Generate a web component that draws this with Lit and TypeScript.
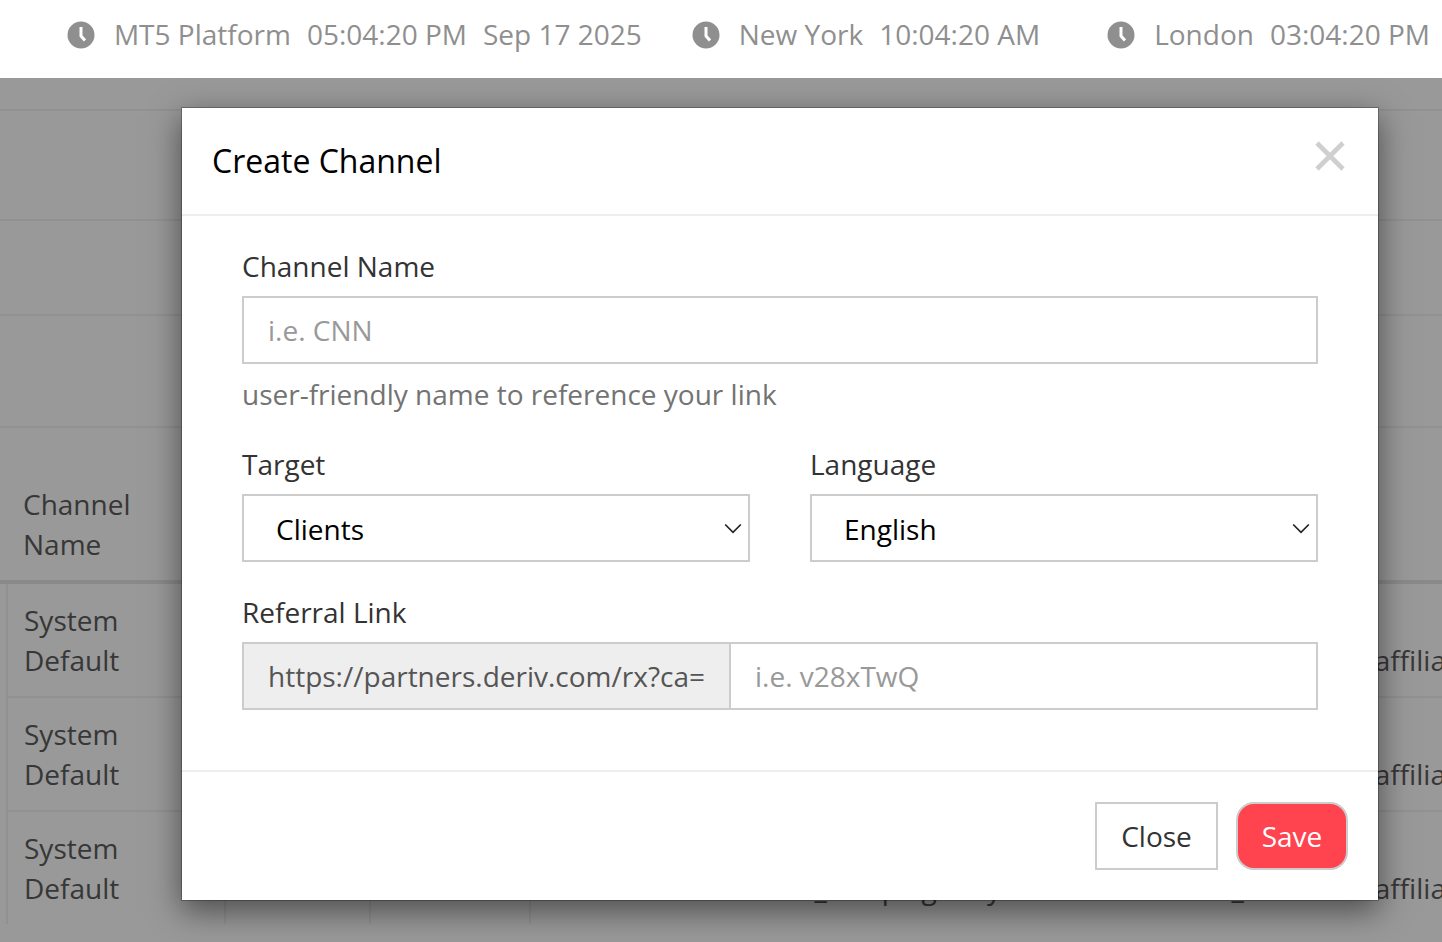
import { LitElement, html, css } from "lit";
import { customElement } from "lit/decorators.js";

const clock = html`<svg class="clock" viewBox="0 0 28 28" aria-hidden="true"><circle cx="14" cy="14" r="13.5" fill="#8f8f8f"/><path d="M14 6v9l4 4.5" fill="none" stroke="#fff" stroke-width="3"/></svg>`;
const chevron = html`<svg class="chev" viewBox="0 0 18 11" aria-hidden="true"><path d="M1.2 1.5 9 9.3l7.8-7.8" fill="none" stroke="#222" stroke-width="1.7"/></svg>`;

@customElement("app-root")
export class AppRoot extends LitElement {
  static styles = css`
    :host { display: block; width: 1442px; height: 942px; overflow: hidden; font-family: "Open Sans", sans-serif; font-size: 28px; line-height: 40px; color: #5c5c5c; background: #fff; }
    * { box-sizing: border-box; }
    .topbar { height: 78px; display: flex; justify-content: flex-end; align-items: center; padding: 0 12px 10px 0; gap: 50px; color: #8f8f8f; white-space: nowrap; }
    .clockgroup { display: flex; align-items: center; gap: 16px; }
    .clockgroup.last { margin-left: 17px; }
    .clock { width: 28px; height: 28px; flex: none; margin-top: 1px; margin-right: 3px; }
    .stage { position: relative; height: 864px; overflow: hidden; }
    .band { border-bottom: 2px solid #f2f2f2; }
    .b1 { height: 33px; } .b2 { height: 110px; } .b3 { height: 95px; } .b4 { height: 112px; }
    .thead { height: 156px; border-bottom: 4px solid #e6e6e6; padding: 56px 0 0 23px; }
    .thead div { width: 130px; }
    .row { display: grid; grid-template-columns: 218px 145px 160px 212px 1fr; height: 114px; margin-left: 6px; border-bottom: 2px solid #f2f2f2; }
    .row.end { height: 112px; border-bottom: 0; }
    .cell { border-left: 2px solid #f2f2f2; padding: 16px 16px; }
    .link { border-left: 0; padding: 56px 0 0; white-space: nowrap; overflow: hidden; }
    .aff { margin-left: 6px; }
    .overlay { position: absolute; inset: 0; background: rgba(0, 0, 0, 0.4); }
    .modal { position: absolute; left: 181px; top: 29px; width: 1198px; height: 794px; background: #fff; background-clip: padding-box; border: 1px solid rgba(0, 0, 0, 0.25); box-shadow: 0 10px 30px rgba(0, 0, 0, 0.5); display: flex; flex-direction: column; color: #333; }
    .mhead { height: 108px; flex: none; border-bottom: 2px solid #eee; padding: 32px 30px 0; display: flex; justify-content: space-between; }
    h4 { margin: 0; font-size: 32px; line-height: 42px; font-weight: 400; color: #000; }
    .x { width: 30px; height: 30px; margin: 1px 3px 0 0; flex: none; filter: blur(0.5px); }
    .mbody { flex: 1; padding: 31px 60px 0; border-bottom: 2px solid #eee; }
    label { display: block; line-height: 38px; margin-bottom: 11px; }
    input, select { display: block; width: 100%; height: 68px; border: 2px solid #ccc; background: #fff; font: inherit; border-radius: 0; outline: none; padding: 0 24px; color: #000; appearance: none; }
    input::placeholder { color: #999; opacity: 1; }
    .help { margin: 10px 0 31px; color: #737373; }
    .cols { display: grid; grid-template-columns: 1fr 1fr; gap: 60px; margin-bottom: 31px; }
    .selwrap { position: relative; }
    select { padding: 2px 0 0 32px; }
    .chev { position: absolute; right: 8px; top: 29px; width: 18px; height: 11px; pointer-events: none; }
    .group { display: flex; }
    .addon { flex: none; width: 489px; height: 68px; line-height: 64px; padding-left: 24px; background: #eee; border: 2px solid #ccc; color: #555; white-space: nowrap; }
    .group input { flex: 1; border-left: 0; }
    .mfoot { height: 128px; flex: none; display: flex; justify-content: flex-end; align-items: flex-start; gap: 18px; padding: 30px 30px 0; }
    button { height: 68px; font: inherit; padding: 0; cursor: pointer; }
    .close { width: 123px; border: 2px solid #ccc; background: #fff; color: #333; border-radius: 0; }
    .save { width: 112px; border: 2px solid #ccc; background: #ff444f; color: #fff; border-radius: 18px; }
  `;

  private row(end = false) {
    return html`<div class="row ${end ? "end" : ""}">
      <div class="cell">System Default</div>
      <div class="cell"></div>
      <div class="cell"></div>
      <div class="cell"></div>
      <div class="link">&amp;utm_campaign=dynamicworks&amp;utm_medium=<span class="aff">affiliate</span></div>
    </div>`;
  }

  render() {
    return html`
      <div class="topbar">
        <div class="clockgroup">${clock}<span>MT5 Platform</span><span>05:04:20 PM</span><span>Sep 17 2025</span></div>
        <div class="clockgroup">${clock}<span>New York</span><span>10:04:20 AM</span></div>
        <div class="clockgroup last">${clock}<span>London</span><span>03:04:20 PM</span></div>
      </div>
      <div class="stage">
        <div class="band b1"></div><div class="band b2"></div><div class="band b3"></div><div class="band b4"></div>
        <div class="thead"><div>Channel Name</div></div>
        ${this.row()}${this.row()}${this.row(true)}
        <div class="overlay"></div>
        <div class="modal">
          <div class="mhead"><h4>Create Channel</h4>
            <svg class="x" viewBox="0 0 30 30" aria-hidden="true"><path d="M2 2l26 26M28 2 2 28" stroke="#cfcfcf" stroke-width="4.6" fill="none"/></svg></div>
          <div class="mbody">
            <label>Channel Name</label>
            <input placeholder="i.e. CNN" />
            <div class="help">user-friendly name to reference your link</div>
            <div class="cols">
              <div><label>Target</label><div class="selwrap"><select><option>Clients</option></select>${chevron}</div></div>
              <div><label>Language</label><div class="selwrap"><select><option>English</option></select>${chevron}</div></div>
            </div>
            <label>Referral Link</label>
            <div class="group"><div class="addon">https://partners.deriv.com/rx?ca=</div><input placeholder="i.e. v28xTwQ" /></div>
          </div>
          <div class="mfoot"><button class="close">Close</button><button class="save">Save</button></div>
        </div>
      </div>`;
  }
}
